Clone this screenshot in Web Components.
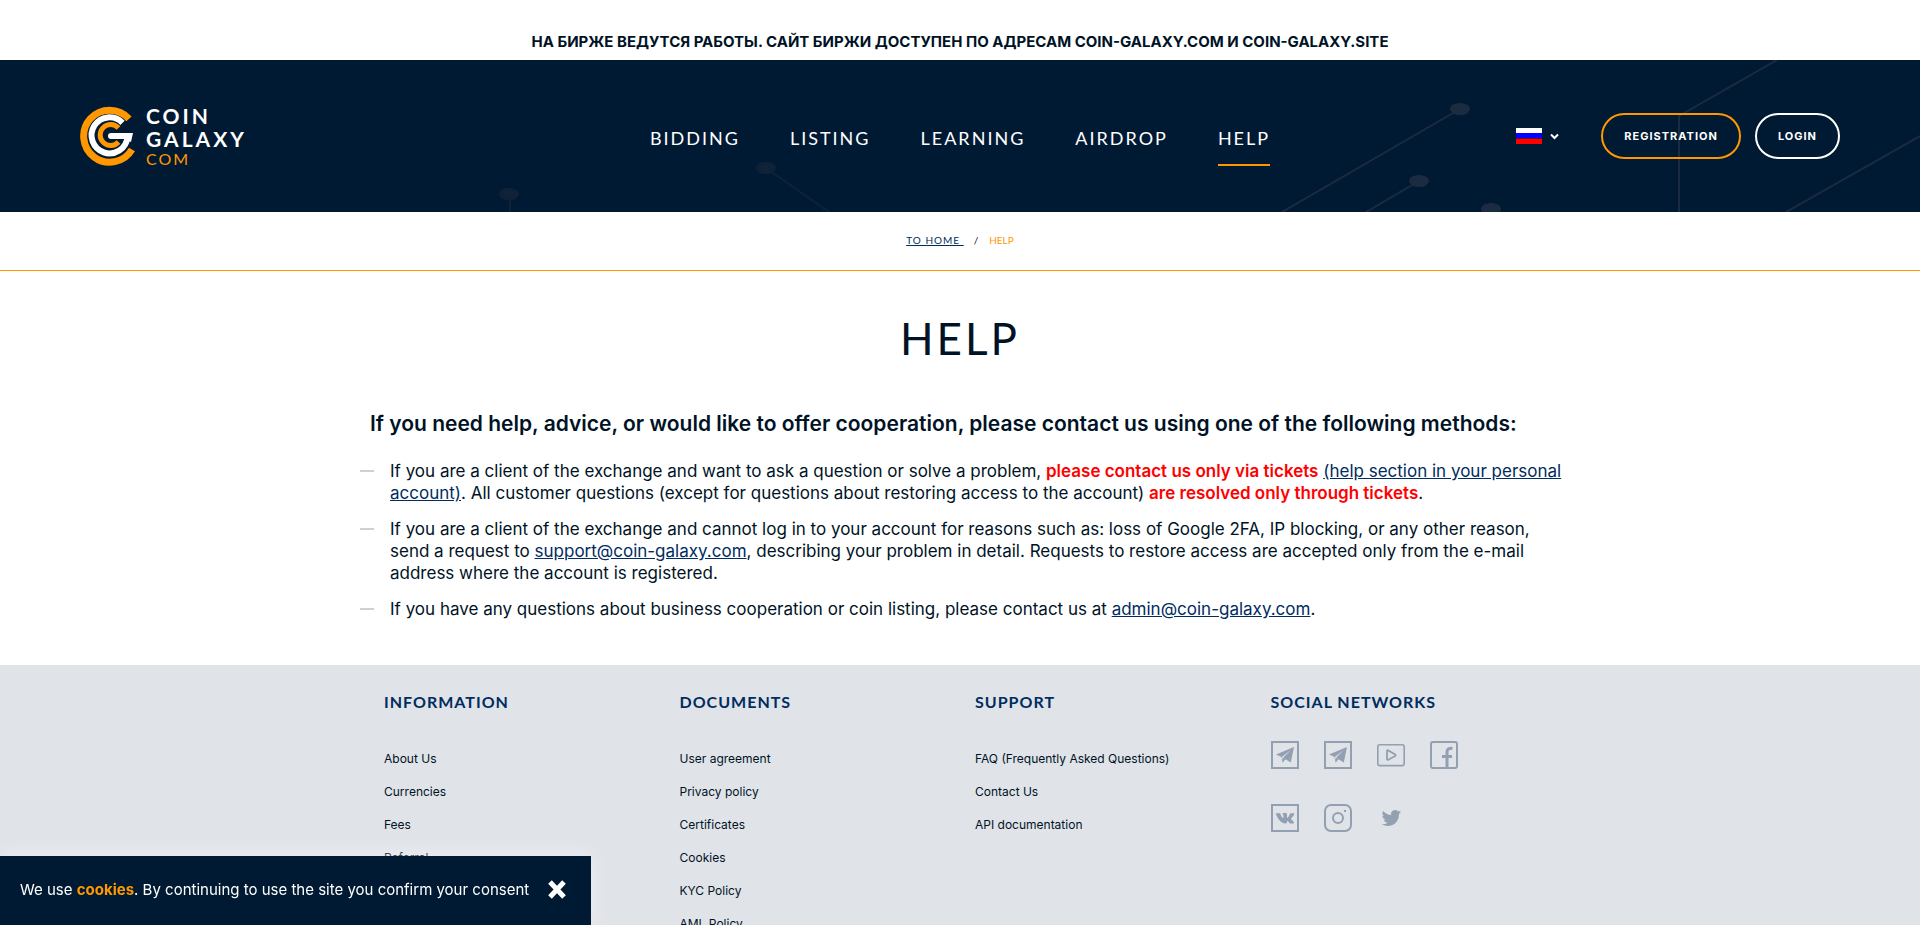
<!DOCTYPE html>
<html lang="en">
<head>
  <meta charset="utf-8">
  <meta name="viewport" content="width=device-width, initial-scale=1">
  <title>Help - Coin Galaxy</title>
  <style>
    :root {
      --navy: #001a33;
      --ink: #001326;
      --blue: #002c5f;
      --orange: #ff9800;
      --display: Lato, "Noto Sans", sans-serif;
    }

    body {
      margin: 0;
      background: white;
      color: var(--ink);
      font-family: Inter, "Liberation Sans", sans-serif;
    }
  </style>
</head>
<body>
  <site-notice>НА БИРЖЕ ВЕДУТСЯ РАБОТЫ. САЙТ БИРЖИ ДОСТУПЕН ПО АДРЕСАМ COIN-GALAXY.COM И COIN-GALAXY.SITE</site-notice>

  <site-header>
    <nav-link slot="nav">BIDDING</nav-link>
    <nav-link slot="nav">LISTING</nav-link>
    <nav-link slot="nav">LEARNING</nav-link>
    <nav-link slot="nav">AIRDROP</nav-link>
    <nav-link slot="nav" active>HELP</nav-link>
    <language-picker slot="user"></language-picker>
    <pill-button slot="user" accent>REGISTRATION</pill-button>
    <pill-button slot="user">LOGIN</pill-button>
  </site-header>

  <crumb-trail current="HELP">TO HOME&nbsp;</crumb-trail>

  <help-page></help-page>

  <site-footer>
    <footer-column heading="INFORMATION" links="About Us|Currencies|Fees|Referral"></footer-column>
    <footer-column heading="DOCUMENTS" links="User agreement|Privacy policy|Certificates|Cookies|KYC Policy|AML Policy"></footer-column>
    <footer-column heading="SUPPORT" links="FAQ (Frequently Asked Questions)|Contact Us|API documentation"></footer-column>
    <footer-column heading="SOCIAL NETWORKS">
      <social-links icons="telegram telegram youtube facebook vk instagram twitter"></social-links>
    </footer-column>
  </site-footer>

  <cookie-bar>We use <b>cookies</b>. By continuing to use the site you confirm your consent</cookie-bar>

  <script>
    class BaseElement extends HTMLElement {
      constructor() {
        super();
        this.attachShadow({ mode: 'open' });
      }

      connectedCallback() {
        this.shadowRoot.innerHTML = this.template();
      }
    }

    class SiteNotice extends BaseElement {
      template() {
        return `
          <style>
            :host {
              display: block;
              padding: 30px 20px 6px;
              text-align: center;
              font-size: 15px;
              font-weight: 700;
              line-height: 24px;
            }
          </style>
          <slot></slot>
        `;
      }
    }

    class SiteLogo extends BaseElement {
      template() {
        return `
          <style>
            :host {
              display: block;
            }

            a {
              display: flex;
              align-items: center;
              gap: 7px;
              color: white;
              text-decoration: none;
            }

            .name {
              font: 700 21px/23px var(--display);
              letter-spacing: 3px;
            }

            .name span {
              display: block;
            }

            .name .com {
              color: var(--orange);
              font-size: 16px;
              font-weight: 400;
              line-height: 18px;
              letter-spacing: 2px;
            }
          </style>
          <a href="#">
            <svg width="59" height="60" viewBox="0 0 59 60" fill="none" aria-hidden="true">
              <path d="M49 12.800A26 26 0 1 0 52 43.500" stroke="#ff9800" stroke-width="7"/>
              <path d="M42.500 16.800A18 18 0 1 0 47.500 31" stroke="#fff" stroke-width="6"/>
              <path d="M31 27H53L51 36L45 33H31A3 3 0 0 1 31 27Z" fill="#fff"/>
              <path d="M38.500 22A10.500 10.500 0 1 0 38.500 36" stroke="#ff9800" stroke-width="5"/>
            </svg>
            <span class="name">
              <span>COIN</span>
              <span>GALAXY</span>
              <span class="com">COM</span>
            </span>
          </a>
        `;
      }
    }

    class SiteHeader extends BaseElement {
      template() {
        return `
          <style>
            :host {
              display: block;
              position: relative;
              background: var(--navy);
              overflow: hidden;
            }

            .stars {
              position: absolute;
              top: 0;
              right: 0;
              width: 1920px;
              height: 152px;
            }

            .bar {
              position: relative;
              display: grid;
              grid-template-columns: 1fr auto 1fr;
              align-items: center;
              height: 152px;
              padding: 0 80px;
            }

            nav {
              display: flex;
              gap: 50px;
            }

            .user {
              display: flex;
              justify-content: flex-end;
              align-items: center;
              gap: 14px;
            }
          </style>
          <svg class="stars" viewBox="0 0 1920 152" fill="none" aria-hidden="true">
            <g stroke="#0f2238" stroke-width="2" fill="#0f2238">
              <path d="M510 134V152M766 108L829 152"/>
              <ellipse cx="509" cy="134" rx="9" ry="5"/>
              <ellipse cx="766" cy="108" rx="9" ry="5"/>
            </g>
            <g stroke="#1c2c40" stroke-width="2">
              <path d="M1460 49L1282 152M1419 121L1366 152M1777 0L1679 56V152M1920 76L1786 152"/>
              <g fill="#1c2c40">
                <ellipse cx="1460" cy="49" rx="9" ry="5"/>
                <ellipse cx="1419" cy="121" rx="9" ry="5"/>
                <ellipse cx="1491" cy="149" rx="9" ry="5"/>
              </g>
            </g>
          </svg>
          <div class="bar">
            <site-logo></site-logo>
            <nav><slot name="nav"></slot></nav>
            <div class="user"><slot name="user"></slot></div>
          </div>
        `;
      }
    }

    class NavLink extends BaseElement {
      template() {
        return `
          <style>
            :host {
              display: block;
            }

            a {
              display: block;
              padding: 22px 0 16px;
              border-bottom: 2px solid transparent;
              color: white;
              font: 400 18px/20px var(--display);
              letter-spacing: 2px;
              text-decoration: none;
            }

            :host([active]) a {
              border-color: var(--orange);
            }
          </style>
          <a href="#"><slot></slot></a>
        `;
      }
    }

    class LanguagePicker extends BaseElement {
      template() {
        return `
          <style>
            :host {
              display: block;
              margin-right: 28px;
            }

            button {
              display: flex;
              align-items: center;
              gap: 8px;
              padding: 0;
              border: 0;
              background: none;
              cursor: pointer;
            }
          </style>
          <button type="button" aria-label="Language" aria-haspopup="listbox">
            <svg width="26" height="16" viewBox="0 0 26 16">
              <path fill="#fff" d="M0 0h26v5H0z"/>
              <path fill="#00f" d="M0 5h26v5H0z"/>
              <path fill="#660033" d="M0 10h26v1H0z"/>
              <path fill="#f00" d="M0 11h26v5H0z"/>
            </svg>
            <svg width="9" height="7" viewBox="0 0 9 7" fill="none" stroke="#fff" stroke-width="2">
              <path d="M1 1.500l3.500 3.500L8 1.500"/>
            </svg>
          </button>
        `;
      }
    }

    class PillButton extends BaseElement {
      template() {
        return `
          <style>
            :host {
              display: block;
            }

            button {
              height: 46px;
              padding: 0 21px;
              border: 2px solid white;
              border-radius: 23px;
              background: none;
              color: white;
              font: 700 11px/16px Inter, sans-serif;
              letter-spacing: 1px;
              cursor: pointer;
            }

            :host([accent]) button {
              border-color: var(--orange);
            }
          </style>
          <button type="button"><slot></slot></button>
        `;
      }
    }

    class CrumbTrail extends BaseElement {
      template() {
        return `
          <style>
            :host {
              display: block;
              padding: 18px 0 20px;
              border-bottom: 1px solid var(--orange);
              font: 400 10px/20px var(--display);
            }

            nav {
              display: flex;
              justify-content: center;
              gap: 10px;
              letter-spacing: 1px;
            }

            a {
              color: var(--blue);
            }

            .current {
              color: var(--orange);
              letter-spacing: 0;
            }
          </style>
          <nav aria-label="Breadcrumb">
            <a href="#"><slot></slot></a>
            <span>/</span>
            <span class="current">${this.getAttribute('current')}</span>
          </nav>
        `;
      }
    }

    class HelpPage extends BaseElement {
      template() {
        return `
          <style>
            :host {
              display: block;
              box-sizing: border-box;
              max-width: 1200px;
              margin: 0 auto;
              padding: 40px 0 45px;
            }

            h1 {
              margin: 0 0 45px;
              font: 400 44px/54px var(--display);
              letter-spacing: 3px;
              text-align: center;
            }

            h2 {
              margin: 0 10px 22px;
              font-size: 21px;
              font-weight: 600;
              line-height: 28px;
            }

            ul {
              display: grid;
              gap: 14px;
              margin: 0 -10px 0 0;
              padding: 0;
              list-style: none;
              font-size: 17px;
              line-height: 22px;
            }

            li {
              display: grid;
              grid-template-columns: 14px 1fr;
              gap: 16px;
            }

            li::before {
              content: "";
              height: 2px;
              margin-top: 10px;
              background: #ccd1d6;
            }

            a {
              color: var(--blue);
            }

            b {
              color: red;
              font-weight: 600;
            }
          </style>
          <h1>HELP</h1>
          <h2>If you need help, advice, or would like to offer cooperation, please contact us using one of the following methods:</h2>
          <ul>
            <li><span>If you are a client of the exchange and want to ask a question or solve a problem, <b>please contact us only via tickets</b> <a href="#">(help section in your personal account)</a>. All customer questions (except for questions about restoring access to the account) <b>are resolved only through tickets</b>.</span></li>
            <li><span>If you are a client of the exchange and cannot log in to your account for reasons such as: loss of Google 2FA, IP blocking, or any other reason, send a request to <a href="#">support@coin-galaxy.com</a>, describing your problem in detail. Requests to restore access are accepted only from the e-mail address where the account is registered.</span></li>
            <li><span>If you have any questions about business cooperation or coin listing, please contact us at <a href="#">admin@coin-galaxy.com</a>.</span></li>
          </ul>
        `;
      }
    }

    class SiteFooter extends BaseElement {
      template() {
        return `
          <style>
            :host {
              display: block;
              padding: 25px 0;
              background: #e0e3e8;
            }

            .columns {
              display: grid;
              grid-template-columns: repeat(4, 1fr);
              box-sizing: border-box;
              max-width: 1200px;
              margin: 0 auto;
              padding: 0 9px;
            }
          </style>
          <footer class="columns"><slot></slot></footer>
        `;
      }
    }

    class FooterColumn extends BaseElement {
      template() {
        const links = (this.getAttribute('links') || '').split('|').filter(Boolean);
        return `
          <style>
            :host {
              display: block;
              padding: 0 15px;
            }

            h3 {
              margin: 0;
              color: var(--blue);
              font: 700 16px/24px var(--display);
              letter-spacing: 1px;
            }

            ul {
              margin: 28px 0 0;
              padding: 0;
              list-style: none;
              font-size: 12px;
              line-height: 33px;
            }

            a {
              color: var(--ink);
              text-decoration: none;
            }
          </style>
          <h3>${this.getAttribute('heading')}</h3>
          ${links.length ? `<ul>${links.map((link) => `<li><a href="#">${link}</a></li>`).join('')}</ul>` : ''}
          <slot></slot>
        `;
      }
    }

    const SOCIAL_ICONS = {
      telegram: '<path d="M1 1h26v26H1z" stroke-width="2"/><path fill="currentColor" stroke="none" d="M5 13.500L23 6l-3.200 15.500-5.300-3.200-2.900 3.400-1.100-5.700zM11 15.800l.9 3.300.8-3.100L20 9z" fill-rule="evenodd"/>',
      youtube: '<rect x="0.800" y="3.800" width="26.400" height="20.800" rx="2" stroke-width="1.600"/><path d="M10 10v8q0 1.300 1.200.8l7-3.800q1-.8 0-1.600l-7-4q-1.200-.6-1.200.6z" stroke-width="1.800"/>',
      facebook: '<rect x="1" y="1" width="26" height="26" rx="2" stroke-width="2"/><path d="M17 27V11q0-4 5.500-3.600M12 15.500h10" stroke-width="3"/>',
      vk: '<path d="M1 1h26v26H1z" stroke-width="2"/><path fill="currentColor" stroke="none" d="M5.200 9.300h3.300c.6 0 .7.300 1 .9.700 1.900 1.700 3.800 2.500 3.800.4 0 .4-.5.400-1.500 0-1.600-.1-2.200-1.200-2.500.5-.8 1.400-1 2.600-1 1.900 0 2.200.4 2.200 1.600v2.700c0 .6.400.6.600.4 1-.9 1.700-2.300 2.300-3.700.2-.5.400-.7 1-.7h3c.6 0 .4.700.2 1.200-.6 1.300-1.800 2.700-2.900 4.100-.3.400-.2.600.2 1 1 .9 2.200 2 2.600 2.900.2.600-.1.900-.7.900h-3c-1 0-2.100-2.300-2.900-2.300-.5 0-.2 1.400-.6 2-.3.500-2.700.5-4-.1-3.200-1.400-5.300-5.300-6.900-9.100-.2-.4-.1-.6.300-.6z"/>',
      instagram: '<rect x="1" y="1" width="26" height="26" rx="6" stroke-width="2"/><circle cx="14" cy="14" r="5" stroke-width="2"/><path fill="currentColor" stroke="none" d="M20 6h2v2h-2z"/>',
      twitter: '<path fill="currentColor" stroke="none" d="M24 7.800c-.6.400-1.300.6-2 .7.800-.5 1.300-1.100 1.600-1.900-.8.400-1.600.7-2.500.9a4 4 0 0 0-6.900 3.600c-3.300-.2-6.200-1.700-8.100-4.100a4 4 0 0 0 1.200 5.300c-.6 0-1.200-.2-1.800-.5 0 2 1.400 3.600 3.200 4-.6.200-1.200.2-1.800.1.500 1.600 2 2.700 3.700 2.800A8.100 8.100 0 0 1 4.600 20.200c9 4.800 17.600-1 17.400-10.200.8-.6 1.500-1.300 2-2.200z"/>'
    };

    class SocialLinks extends BaseElement {
      template() {
        const icons = this.getAttribute('icons').split(' ');
        return `
          <style>
            :host {
              display: grid;
              grid-template-columns: repeat(4, 28px);
              gap: 35px 25px;
              margin-top: 27px;
            }

            a {
              height: 28px;
              color: #92a0b2;
            }

            svg {
              display: block;
            }
          </style>
          ${icons.map((name) => `
            <a href="#" aria-label="${name}">
              <svg width="28" height="28" viewBox="0 0 28 28" fill="none" stroke="currentColor">${SOCIAL_ICONS[name]}</svg>
            </a>
          `).join('')}
        `;
      }
    }

    class CookieBar extends BaseElement {
      template() {
        return `
          <style>
            :host {
              position: fixed;
              left: 0;
              bottom: 0;
              display: flex;
              align-items: center;
              gap: 18px;
              padding: 21px 24px 23px 20px;
              background: var(--navy);
              box-shadow: 0 0 20px rgba(255, 255, 255, 0.5);
              color: white;
              font-size: 15px;
              line-height: 25px;
            }

            ::slotted(b) {
              color: var(--orange);
            }

            button {
              display: block;
              padding: 0;
              border: 0;
              background: none;
              cursor: pointer;
            }

            svg {
              display: block;
            }
          </style>
          <span><slot></slot></span>
          <button type="button" aria-label="Close">
            <svg width="20" height="20" viewBox="0 0 20 20" stroke="#fff" stroke-width="5" fill="none">
              <path d="M3 2l14 15M17 2L3 17"/>
            </svg>
          </button>
        `;
      }

      connectedCallback() {
        super.connectedCallback();
        this.shadowRoot.querySelector('button').addEventListener('click', () => this.remove());
      }
    }

    customElements.define('site-notice', SiteNotice);
    customElements.define('site-logo', SiteLogo);
    customElements.define('site-header', SiteHeader);
    customElements.define('nav-link', NavLink);
    customElements.define('language-picker', LanguagePicker);
    customElements.define('pill-button', PillButton);
    customElements.define('crumb-trail', CrumbTrail);
    customElements.define('help-page', HelpPage);
    customElements.define('site-footer', SiteFooter);
    customElements.define('footer-column', FooterColumn);
    customElements.define('social-links', SocialLinks);
    customElements.define('cookie-bar', CookieBar);
  </script>
</body>
</html>
